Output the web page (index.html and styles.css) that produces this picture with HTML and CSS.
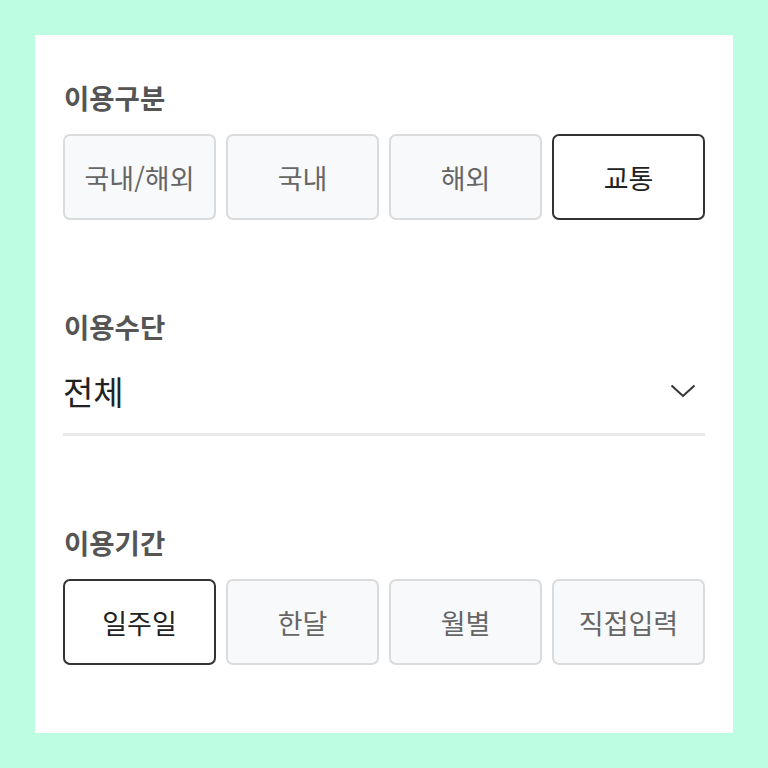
FILE: index.html
```html
<!DOCTYPE html>
<html lang="ko">
<head>
<meta charset="utf-8">
<link rel="stylesheet" href="styles.css">
</head>
<body>
<div class="card">
  <section class="section">
    <h2 class="title">이용구분</h2>
    <div class="options">
      <button class="opt">국내/해외</button>
      <button class="opt">국내</button>
      <button class="opt">해외</button>
      <button class="opt selected">교통</button>
    </div>
  </section>
  <section class="section">
    <h2 class="title">이용수단</h2>
    <div class="select">
      <span class="select-value">전체</span>
      <svg class="chevron" width="26" height="14" viewBox="0 0 26 14"><path d="M1.5 1.5 L13 12 L24.5 1.5" fill="none" stroke="#333" stroke-width="2"/></svg>
    </div>
  </section>
  <section class="section">
    <h2 class="title">이용기간</h2>
    <div class="options">
      <button class="opt selected">일주일</button>
      <button class="opt">한달</button>
      <button class="opt">월별</button>
      <button class="opt">직접입력</button>
    </div>
  </section>
</div>
</body>
</html>
```
FILE: styles.css
```css
html, body {
  margin: 0;
  padding: 0;
}
body {
  background: #bdfde1;
  padding: 35px;
  font-family: "Noto Sans CJK KR", "Noto Sans", sans-serif;
}
.card {
  background: #fff;
  width: 698px;
  height: 698px;
  box-sizing: border-box;
  padding: 47px 28px 0 28px;
  display: flex;
  flex-direction: column;
  gap: 91px;
}
.section {
  display: flex;
  flex-direction: column;
}
.title {
  margin: 0 0 22px 0;
  font-size: 27.5px;
  line-height: 30px;
  font-weight: 700;
  color: #555;
  padding-left: 1px;
}
.options {
  display: grid;
  grid-template-columns: repeat(4, 1fr);
  gap: 10px;
}
.opt {
  height: 86px;
  box-sizing: border-box;
  border: 2px solid #dadbdc;
  border-radius: 7px;
  background: #f8f9fa;
  color: #666;
  font-family: inherit;
  font-size: 27px;
  font-weight: 400;
  padding: 0;
}
.opt.selected {
  border-color: #333;
  background: #fff;
  color: #222;
}
.select {
  display: flex;
  align-items: center;
  justify-content: space-between;
  padding: 8px 0 22px 0;
  border-bottom: 3px solid #e8e8e8;
}
.select-value {
  font-size: 33px;
  line-height: 40px;
  color: #222;
}
.chevron {
  margin-right: 9px;
}
```
